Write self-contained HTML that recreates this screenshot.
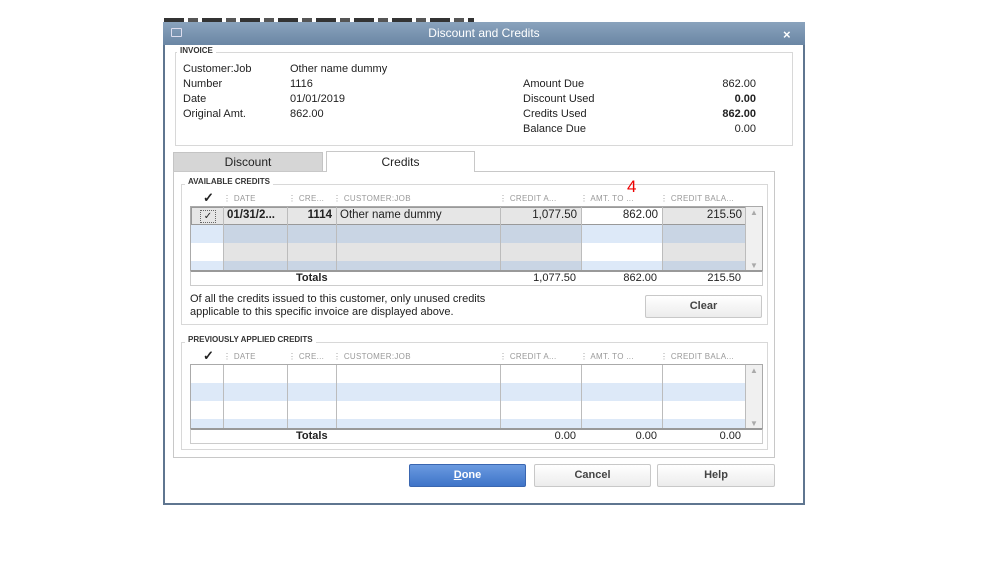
<!DOCTYPE html>
<html><head><meta charset="utf-8"><style>
*{margin:0;padding:0;box-sizing:border-box}
body{width:999px;height:562px;background:#fff;position:relative;overflow:hidden;font-family:"Liberation Sans",Arial,sans-serif;font-size:11px;color:#222}
.a{position:absolute}
.dlg{left:163px;top:22px;width:642px;height:483px;background:#fff;border:2px solid #5f7690;border-top:none}
.title{left:163px;top:22px;width:642px;height:23px;background:linear-gradient(#8aa3bd,#6a86a4);color:#fff;font-size:12px;text-align:center;line-height:23px}
.grp{border:1px solid #d8d8d8}
.lbl{background:#fff;font-size:8px;font-weight:bold;padding:0 3px;color:#333}
.hdr{font-size:8px;color:#999;letter-spacing:.3px}
.r{text-align:right}
.btn{border:1px solid #c8c8c8;border-radius:2px;background:linear-gradient(#fff,#ececec);text-align:center;font-weight:bold;font-size:11px;color:#444;line-height:21px}
.vl{position:absolute;top:0;bottom:0;width:1px;background:#bcbcbc}
</style></head><body>
<div class="a" style="left:164px;top:18px;width:310px;height:4px;background:repeating-linear-gradient(90deg,#333 0 20px,#fff 20px 24px,#555 24px 34px,#fff 34px 38px)"></div>
<div class="a dlg"></div>
<div class="a title">Discount and Credits</div>
<div class="a" style="left:171px;top:28px;width:11px;height:9px;border:1px solid #dde;border-radius:1px"></div>
<div class="a" style="left:783px;top:27px;color:#fff;font-size:13px;font-weight:bold">×</div>

<div class="a grp" style="left:175px;top:52px;width:618px;height:94px"></div>
<div class="a lbl" style="left:177px;top:46px">INVOICE</div>
<div class="a" style="left:183px;top:62px;line-height:15px">Customer:Job<br>Number<br>Date<br>Original Amt.</div>
<div class="a" style="left:290px;top:62px;line-height:15px">Other name dummy<br>1116<br>01/01/2019<br>862.00</div>
<div class="a" style="left:523px;top:77px;line-height:15px">Amount Due<br>Discount Used<br>Credits Used<br>Balance Due</div>
<div class="a r" style="left:690px;top:77px;width:66px;line-height:15px">862.00<br><b>0.00</b><br><b>862.00</b><br>0.00</div>

<div class="a" style="left:173px;top:152px;width:150px;height:19px;background:#d6d6d6;border:1px solid #c4c4c4;border-bottom:none;text-align:center;line-height:18px;font-size:12px">Discount</div>
<div class="a" style="left:326px;top:151px;width:149px;height:21px;background:#fff;border:1px solid #c8c8c8;border-bottom:none;text-align:center;line-height:20px;font-size:12px;z-index:2">Credits</div>
<div class="a" style="left:173px;top:171px;width:602px;height:287px;border:1px solid #c8c8c8"></div>

<div class="a grp" style="left:181px;top:184px;width:587px;height:141px"></div>
<div class="a lbl" style="left:185px;top:177px">AVAILABLE CREDITS</div>
<div class="a" style="left:203px;top:190px;font-size:13px;font-weight:bold">✓</div>
<div class="a hdr" style="left:223px;top:194px">⋮ DATE</div>
<div class="a hdr" style="left:288px;top:194px">⋮ CRE...</div>
<div class="a hdr" style="left:333px;top:194px">⋮ CUSTOMER:JOB</div>
<div class="a hdr" style="left:499px;top:194px">⋮ CREDIT A...</div>
<div class="a hdr" style="left:580px;top:194px">⋮ AMT. TO ...</div>
<div class="a hdr" style="left:660px;top:194px">⋮ CREDIT BALA...</div>
<div class="a" style="left:627px;top:177px;color:#e00;font-size:17px;font-family:'Liberation Sans'">4</div>

<div class="a" style="left:190px;top:206px;width:573px;height:65px;border:1px solid #aaa;overflow:hidden">
 <div class="a" style="left:0;top:0;width:555px;height:18px;background:#e6e6e6;border:1px solid #999"></div>
 <div class="a" style="left:390px;top:1px;width:81px;height:16px;background:#fff"></div>
 <div class="a" style="left:0;top:18px;width:555px;height:18px;background:#dde9f8"></div>
 <div class="a" style="left:32px;top:18px;width:358px;height:18px;background:#c9d5e4"></div>
 <div class="a" style="left:471px;top:18px;width:84px;height:18px;background:#c9d5e4"></div>
 <div class="a" style="left:32px;top:36px;width:358px;height:18px;background:#e4e4e4"></div>
 <div class="a" style="left:471px;top:36px;width:84px;height:18px;background:#e4e4e4"></div>
 <div class="a" style="left:0;top:54px;width:555px;height:10px;background:#dde9f8"></div>
 <div class="a" style="left:32px;top:54px;width:358px;height:10px;background:#c9d5e4"></div>
 <div class="a" style="left:471px;top:54px;width:84px;height:10px;background:#c9d5e4"></div>
 <div class="vl" style="left:32px"></div><div class="vl" style="left:96px"></div><div class="vl" style="left:145px"></div><div class="vl" style="left:309px"></div><div class="vl" style="left:390px"></div><div class="vl" style="left:471px"></div><div class="vl" style="left:554px"></div>
 <div class="a" style="left:555px;top:0;width:17px;height:64px;background:#f0f0f0"></div>
 <div class="a" style="left:559px;top:1px;font-size:8px;color:#aaa">▲</div>
 <div class="a" style="left:559px;top:54px;font-size:8px;color:#aaa">▼</div>
 <div class="a" style="left:9px;top:3px;width:16px;height:13px;border:1px dotted #666;font-size:10px;text-align:center;line-height:12px">✓</div>
 <div class="a" style="left:36px;top:2px;font-size:11.5px;font-weight:bold">01/31/2...</div>
 <div class="a r" style="left:97px;top:2px;width:44px;font-size:11.5px;font-weight:bold">1114</div>
 <div class="a" style="left:149px;top:2px;font-size:11.5px">Other name dummy</div>
 <div class="a r" style="left:310px;top:2px;width:76px;font-size:11.5px">1,077.50</div>
 <div class="a r" style="left:391px;top:2px;width:76px;font-size:11.5px">862.00</div>
 <div class="a r" style="left:472px;top:2px;width:79px;font-size:11.5px">215.50</div>
</div>
<div class="a" style="left:190px;top:270px;width:573px;height:16px;border:1px solid #ccc;border-top:2px solid #999"></div>
<div class="a" style="left:296px;top:272px;font-weight:bold">Totals</div>
<div class="a r" style="left:500px;top:272px;width:76px">1,077.50</div>
<div class="a r" style="left:581px;top:272px;width:76px">862.00</div>
<div class="a r" style="left:662px;top:272px;width:79px">215.50</div>
<div class="a" style="left:190px;top:293px;line-height:12.5px">Of all the credits issued to this customer, only unused credits<br>applicable to this specific invoice are displayed above.</div>
<div class="a btn" style="left:645px;top:295px;width:117px;height:23px">Clear</div>

<div class="a grp" style="left:181px;top:342px;width:587px;height:108px"></div>
<div class="a lbl" style="left:185px;top:335px">PREVIOUSLY APPLIED CREDITS</div>
<div class="a" style="left:203px;top:348px;font-size:13px;font-weight:bold">✓</div>
<div class="a hdr" style="left:223px;top:352px">⋮ DATE</div>
<div class="a hdr" style="left:288px;top:352px">⋮ CRE...</div>
<div class="a hdr" style="left:333px;top:352px">⋮ CUSTOMER:JOB</div>
<div class="a hdr" style="left:499px;top:352px">⋮ CREDIT A...</div>
<div class="a hdr" style="left:580px;top:352px">⋮ AMT. TO ...</div>
<div class="a hdr" style="left:660px;top:352px">⋮ CREDIT BALA...</div>
<div class="a" style="left:190px;top:364px;width:573px;height:65px;border:1px solid #aaa;overflow:hidden">
 <div class="a" style="left:0;top:18px;width:555px;height:18px;background:#dde9f8"></div>
 <div class="a" style="left:0;top:54px;width:555px;height:10px;background:#dde9f8"></div>
 <div class="vl" style="left:32px"></div><div class="vl" style="left:96px"></div><div class="vl" style="left:145px"></div><div class="vl" style="left:309px"></div><div class="vl" style="left:390px"></div><div class="vl" style="left:471px"></div><div class="vl" style="left:554px"></div>
 <div class="a" style="left:555px;top:0;width:17px;height:64px;background:#f0f0f0"></div>
 <div class="a" style="left:559px;top:1px;font-size:8px;color:#aaa">▲</div>
 <div class="a" style="left:559px;top:54px;font-size:8px;color:#aaa">▼</div>
</div>
<div class="a" style="left:190px;top:428px;width:573px;height:16px;border:1px solid #ccc;border-top:2px solid #999"></div>
<div class="a" style="left:296px;top:430px;font-weight:bold">Totals</div>
<div class="a r" style="left:500px;top:430px;width:76px">0.00</div>
<div class="a r" style="left:581px;top:430px;width:76px">0.00</div>
<div class="a r" style="left:662px;top:430px;width:79px">0.00</div>

<div class="a btn" style="left:409px;top:464px;width:117px;height:23px;background:linear-gradient(#6a9ae0,#3f74c8);border-color:#3a66b0;color:#fff"><u>D</u>one</div>
<div class="a btn" style="left:534px;top:464px;width:117px;height:23px">Cancel</div>
<div class="a btn" style="left:657px;top:464px;width:118px;height:23px">Help</div>
</body></html>
